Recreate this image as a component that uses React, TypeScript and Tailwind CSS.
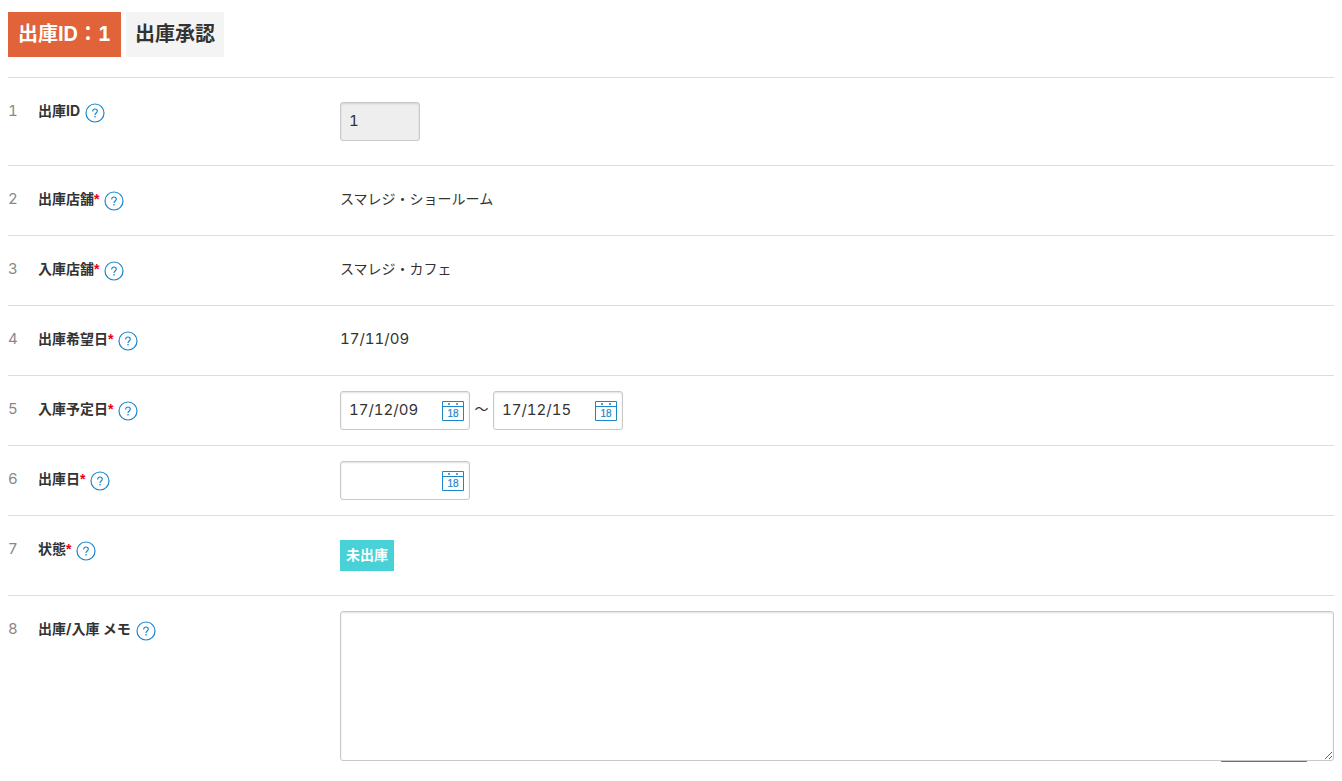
import type { ReactNode } from "react";

const field =
  "h-[39px] rounded-[3px] border border-[#c8c8c8] px-2 pb-[2px] font-['Inter','Noto_Sans_CJK_JP',sans-serif] text-[15px] tabular-nums text-[#333] shadow-[inset_0_1px_2px_rgba(0,0,0,0.12)] outline-none";

function HelpButton({ name }: { name: string }) {
  return (
    <button type="button" aria-label={`${name}のヘルプ`} className="mt-[2px] ml-[5px] size-5 shrink-0">
      <svg viewBox="0 0 20 20" className="size-5" fill="none" stroke="#1c86cc">
        <circle cx="10" cy="10" r="9" strokeWidth="1.2" />
        <path d="M7.7 8.4C7.7 6.9 8.6 6 10 6s2.3.8 2.3 2.1c0 1.9-2.3 2-2.3 4" strokeWidth="1.2" />
        <path d="M10 13.1v1.3" strokeWidth="1.3" />
      </svg>
    </button>
  );
}

function CalendarIcon() {
  return (
    <svg viewBox="0 0 22 20" className="h-5 w-[22px]" fill="none" stroke="#1c86cc">
      <path d="M.5.5h21v19H.5zM.5 5.5h21" />
      <path d="M6 3h2M14 3h2" strokeWidth="1.5" />
      <text
        x="11"
        y="16"
        textAnchor="middle"
        fill="#1c86cc"
        stroke="#1c86cc"
        strokeWidth="0.2"
        className="font-['Liberation_Sans',sans-serif] text-[10px]"
      >
        18
      </text>
    </svg>
  );
}

function DateField({ id, label, value }: { id?: string; label: string; value?: string }) {
  return (
    <div className="relative w-[130px]">
      <input
        id={id}
        type="text"
        aria-label={label}
        defaultValue={value}
        className={`${field} block w-full bg-white`}
      />
      <button type="button" aria-label="カレンダーを開く" className="absolute top-[10px] right-[6px]">
        <CalendarIcon />
      </button>
    </div>
  );
}

type RowProps = {
  no: number;
  label: string;
  htmlFor?: string;
  required?: boolean;
  roomy?: boolean;
  children: ReactNode;
};

function Row({ no, label, htmlFor, required, roomy, children }: RowProps) {
  return (
    <div className="flex border-t border-[#ddd]">
      <div className="flex w-[332px] shrink-0 pt-[23px] leading-5">
        <span className="w-[30px] font-['Inter',sans-serif] text-[15px] text-[#888] tabular-nums">{no}</span>
        <label htmlFor={htmlFor} className="font-bold">
          {label}
          {required && <span className="font-['Liberation_Sans',sans-serif] text-[#e60012]">*</span>}
        </label>
        <HelpButton name={label} />
      </div>
      <div className={roomy ? "min-w-0 flex-1 py-6" : "min-w-0 flex-1 py-[15px]"}>{children}</div>
    </div>
  );
}

function PlainValue({ children }: { children: ReactNode }) {
  return <p className="flex h-[39px] items-center pb-[3px] leading-5">{children}</p>;
}

export default function App() {
  return (
    <main className="bg-white px-2 pt-3 pb-5 font-['Inter','Noto_Sans_CJK_JP',sans-serif] text-sm text-[#333]">
      <h1 className="mb-5 flex gap-[5px] text-[20px] leading-[45px] font-bold tabular-nums">
        <span className="bg-[#e06339] px-[10px] text-white">出庫ID：1</span>
        <span className="bg-[#f4f4f4] px-[9px]">出庫承認</span>
      </h1>
      <form>
        <Row no={1} label="出庫ID" htmlFor="issue-id" roomy>
          <input id="issue-id" type="text" readOnly defaultValue="1" className={`${field} block w-20 bg-[#eee]`} />
        </Row>
        <Row no={2} label="出庫店舗" required>
          <PlainValue>スマレジ・ショールーム</PlainValue>
        </Row>
        <Row no={3} label="入庫店舗" required>
          <PlainValue>スマレジ・カフェ</PlainValue>
        </Row>
        <Row no={4} label="出庫希望日" required>
          <PlainValue>
            <span className="text-[15px] tabular-nums">17/11/09</span>
          </PlainValue>
        </Row>
        <Row no={5} label="入庫予定日" htmlFor="arrival-from" required>
          <div className="flex items-center">
            <DateField id="arrival-from" label="入庫予定日 開始" value="17/12/09" />
            <span className="w-[23px] pb-[3px] text-center">～</span>
            <DateField label="入庫予定日 終了" value="17/12/15" />
          </div>
        </Row>
        <Row no={6} label="出庫日" htmlFor="issue-date" required>
          <DateField id="issue-date" label="出庫日" />
        </Row>
        <Row no={7} label="状態" required roomy>
          <span className="block w-fit bg-[#48d1d6] px-[6px] pb-[2px] leading-[29px] font-bold text-white">
            未出庫
          </span>
        </Row>
        <Row no={8} label="出庫/入庫 メモ" htmlFor="memo">
          <div className="relative">
            <textarea
              id="memo"
              className="block h-[150px] w-full rounded-[3px] border border-[#c8c8c8] bg-white p-2 shadow-[inset_0_1px_2px_rgba(0,0,0,0.12)] outline-none"
            />
            <div className="absolute top-full right-[27px] h-px w-[86px] rounded-full bg-[#1c86cc]" />
          </div>
        </Row>
      </form>
    </main>
  );
}
